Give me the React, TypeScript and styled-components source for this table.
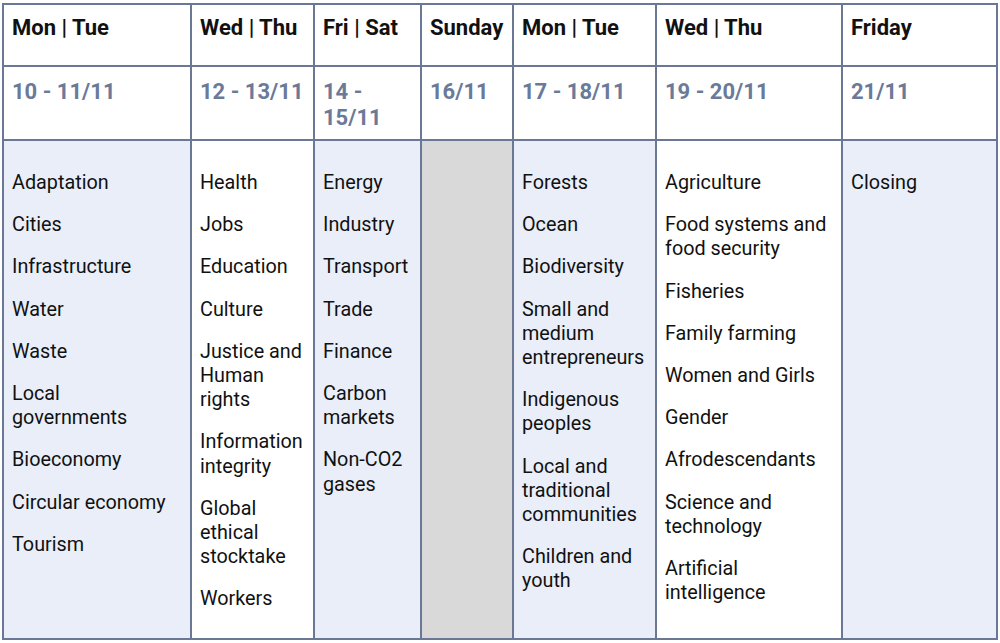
import React from 'react'
import styled, { createGlobalStyle } from 'styled-components'

type Tone = 'blue' | 'white' | 'gray'

type Column = {
  day: string
  date: string
  width: number
  tone: Tone
  padRight?: number
  items: string[]
}

const columns: Column[] = [
  {
    day: 'Mon | Tue',
    date: '10 - 11/11',
    width: 188,
    tone: 'blue',
    padRight: 20,
    items: [
      'Adaptation',
      'Cities',
      'Infrastructure',
      'Water',
      'Waste',
      'Local governments',
      'Bioeconomy',
      'Circular economy',
      'Tourism',
    ],
  },
  {
    day: 'Wed | Thu',
    date: '12 - 13/11',
    width: 123,
    tone: 'white',
    items: [
      'Health',
      'Jobs',
      'Education',
      'Culture',
      'Justice and Human rights',
      'Information integrity',
      'Global ethical stocktake',
      'Workers',
    ],
  },
  {
    day: 'Fri | Sat',
    date: '14 - 15/11',
    width: 107,
    tone: 'blue',
    items: ['Energy', 'Industry', 'Transport', 'Trade', 'Finance', 'Carbon markets', 'Non-CO2 gases'],
  },
  { day: 'Sunday', date: '16/11', width: 92, tone: 'gray', items: [] },
  {
    day: 'Mon | Tue',
    date: '17 - 18/11',
    width: 143,
    tone: 'blue',
    items: [
      'Forests',
      'Ocean',
      'Biodiversity',
      'Small and medium entrepreneurs',
      'Indigenous peoples',
      'Local and traditional communities',
      'Children and youth',
    ],
  },
  {
    day: 'Wed | Thu',
    date: '19 - 20/11',
    width: 186,
    tone: 'white',
    items: [
      'Agriculture',
      'Food systems and food security',
      'Fisheries',
      'Family farming',
      'Women and Girls',
      'Gender',
      'Afrodescendants',
      'Science and technology',
      'Artificial intelligence',
    ],
  },
  { day: 'Friday', date: '21/11', width: 155, tone: 'blue', items: ['Closing'] },
]

const tones: Record<Tone, string> = {
  blue: '#e9eef9',
  white: '#ffffff',
  gray: '#d9d9d9',
}

const GlobalStyle = createGlobalStyle`
  html, body {
    margin: 0;
    padding: 0;
    background: #ffffff;
  }
  body {
    font-family: Roboto, "Liberation Sans", Arial, sans-serif;
    color: #111111;
  }
`

const Page = styled.div`
  width: 1000px;
  height: 643px;
  padding: 3px 0 0 2px;
  box-sizing: border-box;
  overflow: hidden;
`

const Table = styled.table`
  border-collapse: collapse;
  table-layout: fixed;
  width: 996px;
`

const Cell = styled.td`
  border: 2px solid #6b7895;
  vertical-align: top;
  padding: 10px 8px 0 8px;
  text-align: left;
  box-sizing: border-box;
`

const HeadCell = styled(Cell)`
  height: 62px;
  font-weight: 700;
  font-size: 22px;
  line-height: 26px;
  color: #111111;
  background: #ffffff;
`

const DateCell = styled(Cell)`
  height: 74px;
  padding-top: 12px;
  font-weight: 700;
  font-size: 22px;
  line-height: 26px;
  color: #6b7a99;
  background: #ffffff;
`

const BodyCell = styled(Cell)<{ $tone: Tone; $padRight: number }>`
  height: 499px;
  padding-top: 30px;
  padding-right: ${(p) => p.$padRight}px;
  background: ${(p) => tones[p.$tone]};
`

const ItemList = styled.div`
  display: flex;
  flex-direction: column;
  gap: 18px;
`

const Item = styled.div`
  font-size: 19.8px;
  line-height: 24.2px;
  color: #111111;
`

export default function App() {
  return (
    <Page>
      <GlobalStyle />
      <Table>
        <colgroup>
          {columns.map((c, i) => (
            <col key={i} style={{ width: c.width }} />
          ))}
        </colgroup>
        <tbody>
          <tr>
            {columns.map((c, i) => (
              <HeadCell key={i}>{c.day}</HeadCell>
            ))}
          </tr>
          <tr>
            {columns.map((c, i) => (
              <DateCell key={i}>{c.date}</DateCell>
            ))}
          </tr>
          <tr>
            {columns.map((c, i) => (
              <BodyCell key={i} $tone={c.tone} $padRight={c.padRight ?? 8}>
                <ItemList>
                  {c.items.map((item) => (
                    <Item key={item}>{item}</Item>
                  ))}
                </ItemList>
              </BodyCell>
            ))}
          </tr>
        </tbody>
      </Table>
    </Page>
  )
}
